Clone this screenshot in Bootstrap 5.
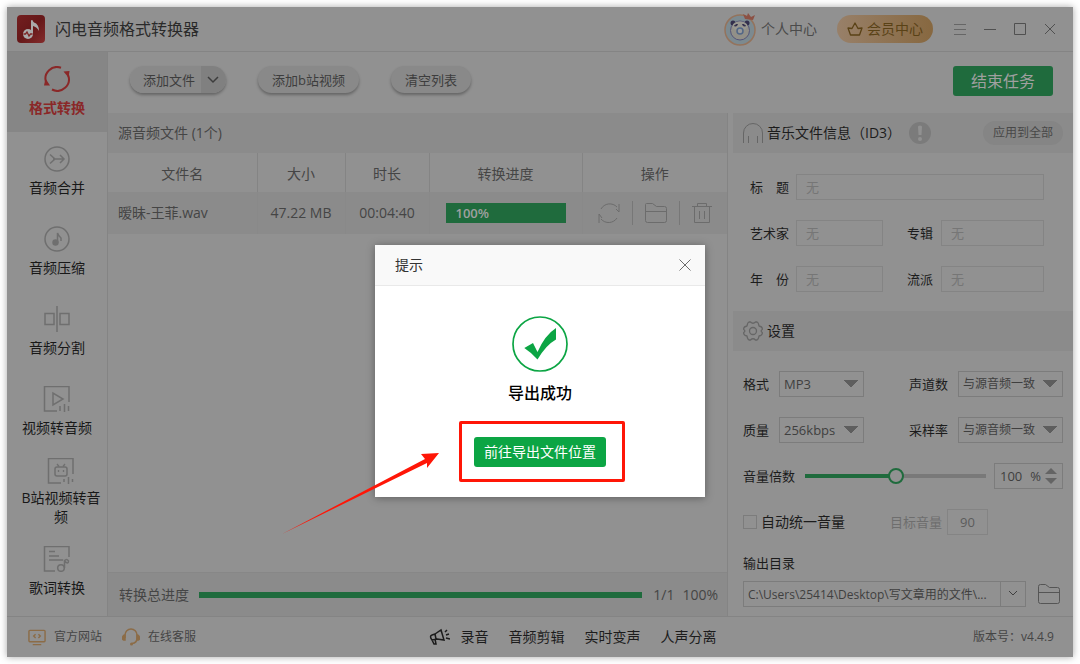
<!DOCTYPE html>
<html lang="zh-CN">
<head>
<meta charset="utf-8">
<meta name="viewport" content="width=device-width, initial-scale=1">
<title>闪电音频格式转换器</title>
<link href="https://cdn.jsdelivr.net/npm/bootstrap@5.3.0/dist/css/bootstrap.min.css" rel="stylesheet">
<style>
:root{--base:#919191;--band:#8b8b8b;--line:#848484;--edge:#7c7c7c;--ink:#1c1c1c;--soft:#454545;--mute:#6e6e6e;--green:#1f6b3d;--gold:#8c6c47}
body{font-family:"Open Sans","Noto Sans CJK SC",sans-serif;font-size:14px;line-height:20px;color:var(--ink);background:#fff;padding:7px}
button{font-family:inherit}
svg{display:block;flex:none;fill:none}
svg:not([stroke]){stroke:currentColor}
a{color:inherit;text-decoration:none}
.fs13{font-size:13px}.fs12{font-size:12px}
.soft{color:var(--soft)}.mute{color:var(--mute)}
.app{min-height:calc(100vh - 14px);background:var(--base);box-shadow:0 0 7px rgba(0,0,0,.35)}
.titlebar{height:45px;padding:0 8px 0 10px;border-bottom:1px solid var(--line)}
.app-name{font-size:16px;color:#2a2a2a;margin-left:10px}
.vip{height:28px;width:96px;border:0;border-radius:14px;color:#5a4216;background:linear-gradient(90deg,#988069,#876840)}
.winbtn{width:30px;height:30px;border:0;padding:0;background:none;color:#505050;display:grid;place-items:center}
.side{width:101px;border-right:1px solid var(--line)}
.side .nav-link{height:80px;padding:0;color:#181818;text-align:center;display:flex;flex-direction:column;align-items:center;justify-content:center;gap:6px}
.side .nav-link svg{color:#6f6f6f;stroke-width:2}
.side .nav-link.active{background:#868686;color:#8a2828;font-weight:700}
.side .nav-link.active svg{color:#8a2828}
.side .nav-link.wide{padding:0 6px 0 14px;gap:4px;line-height:19px}
.toolbar{height:61px;padding:14px 20px 0 22px}
.toolbar>.pill{margin-left:32px}
.pill{height:27px;border:0;border-radius:14px;background:#898989;color:#3d3d3d;font-size:13px;line-height:20px;padding:0 13px;box-shadow:0 2px 3px rgba(0,0,0,.3)}
.toolbar>.pill{padding:0 14px}
.pill-group{border-radius:14px;box-shadow:0 2px 3px rgba(0,0,0,.3)}
.pill-group .pill{box-shadow:none}
.pill-group .pill:first-child{border-radius:14px 0 0 14px;padding-right:6px}
.pill-group .pill:last-child{border-radius:0 14px 14px 0;background:#808080;padding:0 7px 0 6px}
.stop{width:100px;height:30px;border:0;border-radius:3px;background:var(--green);color:#a0a0a0;font-size:16px}
.band{height:40px;background:var(--band);padding:0 10px}
.columns{gap:5px}
.files,.work{min-width:0}
.files{border-right:1px solid var(--line)}
.tasks{width:100%;table-layout:fixed;color:var(--soft)}
.tasks .c-size{width:88px}.tasks .c-time{width:84px}.tasks .c-prog{width:153px}.tasks .c-act{width:145px}
.tasks th{height:39px;font-weight:400;text-align:center;padding:2px 0 0;border-right:1px solid var(--line)}
.tasks td{height:42px;text-align:center;padding:0;background:var(--band);border-right:1px solid #898989}
.tasks td.fname{text-align:left;padding-left:10px}
.tasks th:last-child,.tasks td:last-child{border-right:0}
.tasks .progress{height:20px;border-radius:0;margin:0 16px;background:#858585}
.tasks .progress-bar{background:var(--green);color:#a0a0a0;text-align:left;padding-left:10px;font-size:13px;font-weight:600}
.acts{padding-right:4px}
.act{border:0;background:none;padding:0;color:#6c6c6c}
.split{width:1px;height:24px;background:#777}
.total{height:44px;background:var(--band);border-top:1px solid #878787;padding:0 9px 0 11px}
.total .progress{height:6px;border-radius:0;background:#7c7c7c;margin:0 11px 0 10px}
.total .progress-bar{background:var(--green)}
.panel{width:340px}
.chip{width:80px;height:24px;border:0;border-radius:12px;background:#858585;color:#484848;font-size:12px}
.tags{display:grid;grid-template-columns:46px 87fr 58px 103fr;row-gap:20px;padding:21px 29px 19px 17px}
.tags label{width:39px;text-align-last:justify;white-space:nowrap;font-size:13px;line-height:26px}
.tags label.second{width:26px;margin-left:24px}
.box{height:26px;min-width:0;border:1px solid var(--line);border-radius:0;background:transparent;color:var(--mute);font-size:13px;line-height:20px;outline:0}
.tags .box{padding:0 9px}
.box::placeholder{color:#767676;opacity:1}
.tags .span3{grid-column:span 3}
.opts{display:grid;grid-template-columns:36px 85px 84px 1fr;row-gap:20px;padding:20px 10px 9px}
.opts .full{grid-column:1/-1;display:flex;align-items:center;height:26px}
.opts .outdir{height:auto;flex-direction:column;align-items:stretch;gap:8px;margin-top:-2px}
.opts label.key{font-size:13px;line-height:26px}
.opts .box{border-color:var(--edge);color:#3f3f3f}
.opts .indent{padding-left:10px}
.opts select.box{appearance:none;width:100%;padding:0 20px 0 4px;background:linear-gradient(to bottom right,#5e5e5e 50%,transparent 50%) no-repeat right 5px center/7px 8px,linear-gradient(to bottom left,#5e5e5e 50%,transparent 50%) no-repeat right 12px center/7px 8px}
.opts select.long{font-size:12px}
.vol{appearance:none;height:16px;background:linear-gradient(90deg,var(--green) 50%,#797979 50%) no-repeat center/100% 4px;margin:0 8px 0 10px;min-width:0}
.vol::-webkit-slider-thumb{appearance:none;width:16px;height:16px;border:2px solid var(--green);border-radius:50%;background:var(--base)}
.spin{width:69px;display:flex;align-items:center;padding:0 5px}
.spin input{width:28px;border:0;padding:0;background:none;color:inherit;outline:0}
.spin button{display:block;border:0;padding:0;background:none;color:#646464}
.tick{appearance:none;width:14px;height:14px;border:1px solid var(--edge);margin:0 4px 0 0}
.target{margin-left:45px}
.opts .goal{width:41px;padding:0;margin-left:5px;color:#5c5c5c;border-color:var(--line)}
.dir{min-width:0}
.dir input.box{font-size:12px;padding:0 4px}
.dir button.box{width:26px;padding:0;display:grid;place-items:center}
.open{margin:0 3px 0 12px;color:#555}
.statusbar{height:41px;border-top:1px solid var(--line);padding:0 19px 0 21px}
.status-left svg:nth-of-type(2){margin-left:20px}
.status-mid{gap:20px}
.shade{position:absolute;inset:0;padding-top:245px;display:flex;justify-content:center;align-items:flex-start;pointer-events:none}
.dialog{position:relative;width:330px;background:#fff;box-shadow:0 1px 8px rgba(0,0,0,.35);pointer-events:auto}
.dialog header{height:41px;background:#f9f9f9;border-bottom:1px solid #e9e9e9;padding:0 13px 0 20px;color:#333}
.dialog-main{padding:30px 0;color:#000}
.dialog h2{font-size:16px;line-height:20px;font-weight:500;margin:11px 0 34px}
.go{position:relative}
.go button{width:132px;height:30px;border:0;border-radius:3px;background:#0ca544;color:#fff;font-size:14px;padding:0}
.frame{position:absolute;inset:-16px -19px -15px -15px;border:3px solid #ff1607;border-radius:2px;pointer-events:none}
.pointer{position:absolute;right:266px;bottom:-38px}
</style>
</head>
<body>
<div class="app d-flex flex-column">
  <header class="titlebar d-flex align-items-center">
    <svg width="28" height="28" viewBox="0 0 28 28"><defs><linearGradient id="lg" x1="0" y1="0" x2="1" y2="1"><stop stop-color="#741f20"/><stop offset=".5" stop-color="#661819"/><stop offset="1" stop-color="#842c2c"/></linearGradient></defs><rect width="28" height="28" rx="4" fill="url(#lg)" stroke="none"/><path d="M15 5.500v13" stroke="#aaa" stroke-width="2"/><path d="M14 5q1.500 0 3 2.500 5 1.500 5 8.500-2-4-6-5z" fill="#aaa" stroke="none"/><circle cx="11" cy="19" r="5" fill="#aaa" stroke="none"/><path d="M6.500 19h2l1.500-2 2 4 1.500-2h2" stroke="#7d2525" stroke-width="1.300"/></svg>
    <span class="app-name me-auto">闪电音频格式转换器</span>
    <svg width="34" height="36" viewBox="0 0 34 36"><circle cx="17" cy="19" r="15" fill="#7c8a90" stroke="#94735c" stroke-width="1.500"/><path d="M20 3l4 2 1-3 3 4 4-2-2 5-8-1z" fill="#8c5144" stroke="none"/><circle cx="17" cy="19.500" r="9.500" fill="#929088" stroke="#55557a"/><circle cx="10" cy="12" r="2.500" fill="#332f4d" stroke="none"/><circle cx="24" cy="12" r="2.500" fill="#332f4d" stroke="none"/><ellipse cx="17" cy="15" rx="7.500" ry="4.500" fill="#999790" stroke="none"/><path d="M11.500 15q1-2 3-1.500-.5 2-3 1.500zM22.500 15q-1-2-3-1.500.5 2 3 1.500z" fill="#332f4d" stroke="#332f4d"/><circle cx="17" cy="20" r="3" fill="#999" stroke="#526786" stroke-width="1.500"/></svg>
    <a href="#" class="ms-1 me-3" style="color:#4b4b4b">个人中心</a>
    <button class="vip d-flex align-items-center justify-content-center gap-1 ms-1 me-2 p-0"><svg width="16" height="16" viewBox="0 0 16 16" stroke-width="1.300"><path d="M3.500 14 1 7l4 .5L8 2l3 5.500 4-.5-2.500 7z" stroke-linejoin="round"/></svg>会员中心</button>
    <div class="d-flex ms-1">
      <button class="winbtn" aria-label="菜单"><svg width="12" height="12" stroke="#666"><path d="M0 1.500h12M0 6.500h12M0 11.500h12"/></svg></button>
      <button class="winbtn" aria-label="最小化"><svg width="12" height="12"><path d="M0 6.500h12"/></svg></button>
      <button class="winbtn" aria-label="最大化"><svg width="12" height="12"><path d="M.5.5h11v11H.5z"/></svg></button>
      <button class="winbtn" aria-label="关闭"><svg width="12" height="12"><path d="M1 1l10 10M11 1L1 11"/></svg></button>
    </div>
  </header>

  <div class="d-flex flex-grow-1">
    <nav class="side nav flex-column flex-nowrap flex-shrink-0">
      <a class="nav-link active" href="#"><svg width="26" height="26" viewBox="0 0 26 26"><path d="M17 1.800A11.500 11.500 0 0 0 2 16M8 23.500A11.500 11.500 0 0 0 24 9"/><path d="M0 19.500l1.500-7 4.500 7zM19.500 5.500l6-.5-1 6.500z" fill="currentColor" stroke="none"/></svg>格式转换</a>
      <a class="nav-link" href="#"><svg width="26" height="26" viewBox="0 0 26 26"><circle cx="13" cy="13" r="12" stroke-width="1.500"/><path d="M6 8.500l5 4.500-5 4.500M9 13h11M16 9l4 4-4 4" stroke-width="1.500"/></svg>音频合并</a>
      <a class="nav-link" href="#"><svg width="26" height="26" viewBox="0 0 26 26"><circle cx="13" cy="13" r="12" stroke-width="1.500"/><circle cx="11.500" cy="16.500" r="3.200" fill="currentColor" stroke="none"/><path d="M13.500 17V7q1 3 3.500 5v3" stroke-width="1.500"/></svg>音频压缩</a>
      <a class="nav-link" href="#"><svg width="26" height="26" viewBox="0 0 26 26"><path d="M13 0v26M1 7.500h9v11H1zM16 7.500h9v11h-9z" stroke-width="1.500"/></svg>音频分割</a>
      <a class="nav-link" href="#"><svg width="28" height="26" viewBox="0 1 28 26"><path d="M14 26H1.500V1.500H26V17" stroke-width="1.500"/><path d="M10 8v12l10-6zM17 21v5M21.500 19v8M25.500 21v5" stroke-width="1.500"/></svg>视频转音频</a>
      <a class="nav-link wide" href="#"><svg width="28" height="26" viewBox="0 1 28 26"><path d="M14 26H1.500V1.500H26V17M17 22v3M21.500 20v7M25.500 22v3" stroke-width="1.500"/><rect x="8" y="10" width="12" height="9" rx="2" stroke-width="1.500"/><path d="M10 7l2 2.500M18 7l-2 2.500M11.500 13v2M16.500 13v2" stroke-width="1.300"/></svg>B站视频转音频</a>
      <a class="nav-link" href="#"><svg width="28" height="26" viewBox="0 1 28 26"><path d="M12 26H1.500V1.500H26V12M6 6.500h6M6 11h10M6 15h14" stroke-width="1.500"/><circle cx="18" cy="23" r="3.300" stroke-width="1.500"/><path d="M21.500 23v-7q4 4 4 0-2-3-4 0" stroke-width="1.500"/></svg>歌词转换</a>
    </nav>

    <div class="work flex-grow-1 d-flex flex-column">
      <div class="toolbar d-flex align-items-start">
        <div class="pill-group d-flex">
          <button class="pill">添加文件</button><button class="pill" aria-label="更多"><svg width="12" height="8" stroke-width="1.500"><path d="M1 1l5 5 5-5"/></svg></button>
        </div>
        <button class="pill">添加b站视频</button>
        <button class="pill">清空列表</button>
        <button class="stop ms-auto p-0">结束任务</button>
      </div>
      <div class="columns d-flex flex-grow-1">
        <main class="files flex-grow-1 d-flex flex-column">
          <div class="band d-flex align-items-center soft">源音频文件 (1个)</div>
          <table class="tasks">
            <colgroup><col><col class="c-size"><col class="c-time"><col class="c-prog"><col class="c-act"></colgroup>
            <thead><tr><th>文件名</th><th>大小</th><th>时长</th><th>转换进度</th><th>操作</th></tr></thead>
            <tbody><tr>
              <td class="fname">暧昧-王菲.wav</td><td>47.22 MB</td><td>00:04:40</td>
              <td><div class="progress"><div class="progress-bar" style="width:100%">100%</div></div></td>
              <td><div class="acts d-flex align-items-center justify-content-center gap-2">
                <button class="act" aria-label="重新转换"><svg width="30" height="24" viewBox="0 0 30 24"><path d="M7 8A10 10 0 0 1 23 6M25 3v8l-3-3M23 17A10 10 0 0 1 7 18M5 22v-9l3 4"/></svg></button>
                <span class="split"></span>
                <button class="act mx-1" aria-label="打开文件夹"><svg width="22" height="22" viewBox="0 0 22 22"><path d="M.5 2.500q0-1 1-1h6l4 3h8q2 0 2 2v12q0 2-2 2h-17q-2 0-2-2zM.5 9.500h21"/></svg></button>
                <span class="split"></span>
                <button class="act ms-1" aria-label="删除"><svg width="20" height="22" viewBox="0 0 20 22"><path d="M0 4.500h20M5.500 4V1.500h9V4M2.500 5v15.500h15V5M7.500 9v8M12.500 9v8"/></svg></button>
              </div></td>
            </tr></tbody>
          </table>
          <div class="total d-flex align-items-center mt-auto soft">
            <span>转换总进度</span>
            <div class="progress flex-grow-1"><div class="progress-bar" style="width:100%"></div></div>
            <span>1/1</span><span class="ms-2">100%</span>
          </div>
        </main>

        <aside class="panel flex-shrink-0">
          <div class="band d-flex align-items-center">
            <svg width="20" height="20" viewBox="0 0 20 20" stroke="#666"><path d="M.5 20V10a9.500 9.500 0 0 1 19 0v10M5.500 20v-7M14.500 20v-7"/></svg>
            <span class="ms-1">音乐文件信息（ID3）</span>
            <svg class="ms-2" width="22" height="22" viewBox="0 0 22 22" stroke="none"><circle cx="11" cy="11" r="11" fill="#7b7b7b"/><path d="M9 4.500q2-2 4 0L12.500 13h-3z" fill="#919191"/><circle cx="11" cy="17" r="2" fill="#919191"/></svg>
            <button class="chip ms-auto p-0">应用到全部</button>
          </div>
          <div class="tags">
            <label for="t1">标 题</label><input id="t1" class="box span3" placeholder="无">
            <label for="t2">艺术家</label><input id="t2" class="box" placeholder="无">
            <label for="t3" class="second">专辑</label><input id="t3" class="box" placeholder="无">
            <label for="t4">年 份</label><input id="t4" class="box" placeholder="无">
            <label for="t5" class="second">流派</label><input id="t5" class="box" placeholder="无">
          </div>
          <div class="band d-flex align-items-center">
            <svg width="20" height="20" viewBox="0 0 20 20" stroke="#666" stroke-width="1.300"><path d="M6 1h1.500Q10 3.500 12.500 1H14q1.500.5 2 4 3 .5 3.300 2.500v1q-2.300 1.500 0 3v1q-.3 2-3.300 2.500-.5 3.500-2 4h-1.500Q10 16.500 7.500 19H6q-1.500-.5-2-4-3-.5-3.300-2.500v-1q2.300-1.500 0-3v-1Q1 5.500 4 5q.5-3.500 2-4z" stroke-linejoin="round"/><circle cx="10" cy="10" r="3.500"/></svg>
            <span class="ms-1">设置</span>
          </div>
          <div class="opts">
            <label class="key" for="o1">格式</label><select id="o1" class="box"><option>MP3</option></select>
            <label class="key text-end" for="o2">声道数</label><div class="indent"><select id="o2" class="box long"><option>与源音频一致</option></select></div>
            <label class="key" for="o3">质量</label><select id="o3" class="box"><option>256kbps</option></select>
            <label class="key text-end" for="o4">采样率</label><div class="indent"><select id="o4" class="box long"><option>与源音频一致</option></select></div>
            <div class="full">
              <label class="key" for="o5">音量倍数</label>
              <input id="o5" class="vol flex-grow-1" type="range" min="0" max="200" value="100">
              <div class="box spin"><input type="text" value="100" aria-label="音量百分比"><span class="ms-auto me-1">%</span>
                <span class="d-grid gap-1"><button aria-label="增加"><svg width="12" height="6"><path d="M0 6l6-6 6 6z" fill="currentColor" stroke="none"/></svg></button><button aria-label="减少"><svg width="12" height="6"><path d="M0 0l6 6 6-6z" fill="currentColor" stroke="none"/></svg></button></span></div>
            </div>
            <div class="full">
              <input id="o6" class="tick" type="checkbox"><label for="o6">自动统一音量</label>
              <label class="target mute fs13" for="o7">目标音量</label>
              <input id="o7" class="box goal text-center" value="90">
            </div>
            <div class="full outdir">
              <label class="fs13" for="o8">输出目录</label>
              <div class="d-flex align-items-center">
                <div class="dir d-flex flex-grow-1"><input id="o8" class="box flex-grow-1 border-end-0" value="C:\Users\25414\Desktop\写文章用的文件\..."><button class="box" aria-label="选择目录"><svg width="10" height="6"><path d="M1 0l4 4 4-4"/></svg></button></div>
                <button class="act open" aria-label="打开目录"><svg width="22" height="22" viewBox="0 0 22 22"><path d="M.5 3.500q0-2 2-2h5l4 3h8q2 0 2 2v12q0 2-2 2h-17q-2 0-2-2zM.5 9.500h21"/></svg></button>
              </div>
            </div>
          </div>
        </aside>
      </div>
    </div>
  </div>

  <footer class="statusbar d-flex align-items-center justify-content-between">
    <div class="status-left d-flex align-items-center fs12 soft">
      <svg width="18" height="17" viewBox="0 0 19 17" stroke="#8c6c47" stroke-width="1.500"><rect x="1" y="1" width="17" height="12" rx="1"/><path d="M5 16h9M8 5L6 7l2 2M11 5l2 2-2 2"/></svg>
      <a href="#" class="ms-2">官方网站</a>
      <svg width="18" height="18" viewBox="0 0 18 18" stroke="#8c6c47" stroke-width="1.500"><path d="M3 10V7a6 6 0 0 1 12 0v3q0 5-5 5.500"/><path d="M3 7v5Q0 12 .5 9.500T3 7zM15 7v5q3 0 2.500-2.500T15 7z" fill="#8c6c47"/><circle cx="9.500" cy="16" r="1.500" fill="#8c6c47" stroke="none"/></svg>
      <a href="#" class="ms-2">在线客服</a>
    </div>
    <div class="status-mid d-flex align-items-center me-4">
      <a href="#" class="d-flex align-items-center" style="gap:11px"><svg width="21" height="18" viewBox="0 0 21 18" stroke-width="1.500"><path d="M6 6l6-4 3 10-7-1-5 1q-3-4 0-5zM3 12l2 4h2l-1-5M6 6l1 5M16 4l2-2M17 7l3-1M17 10l4 1"/></svg>录音</a>
      <a href="#">音频剪辑</a><a href="#">实时变声</a><a href="#">人声分离</a>
    </div>
    <div class="fs12 soft">版本号：v4.4.9</div>
  </footer>
</div>

<div class="shade">
  <section class="dialog" role="dialog" aria-label="提示">
    <header class="d-flex align-items-center justify-content-between"><span>提示</span><button class="act" aria-label="关闭提示"><svg width="14" height="14"><path d="M1.500 1.500l11 11M12.500 1.500l-11 11"/></svg></button></header>
    <div class="dialog-main d-flex flex-column align-items-center">
      <svg width="56" height="56" viewBox="0 0 56 56" stroke="#0ca544"><circle cx="28" cy="28" r="27" stroke-width="1.700"/><path d="M12.300 32l8.700-5 4.500 9Q33 19 44 12v11.500Q34 29 25.500 43.500 20 37 12.300 32z" fill="#0ca544" stroke="none"/></svg>
      <h2>导出成功</h2>
      <div class="go"><button>前往导出文件位置</button><span class="frame"></span></div>
    </div>
    <svg class="pointer" width="158" height="84" viewBox="0 0 158 84"><path d="M1 83L144 8 140 3 158 2 146 17 146 12z" fill="#ff1607" stroke="none"/></svg>
  </section>
</div>
<script src="https://cdn.jsdelivr.net/npm/bootstrap@5.3.0/dist/js/bootstrap.bundle.min.js"></script>
</body>
</html>
